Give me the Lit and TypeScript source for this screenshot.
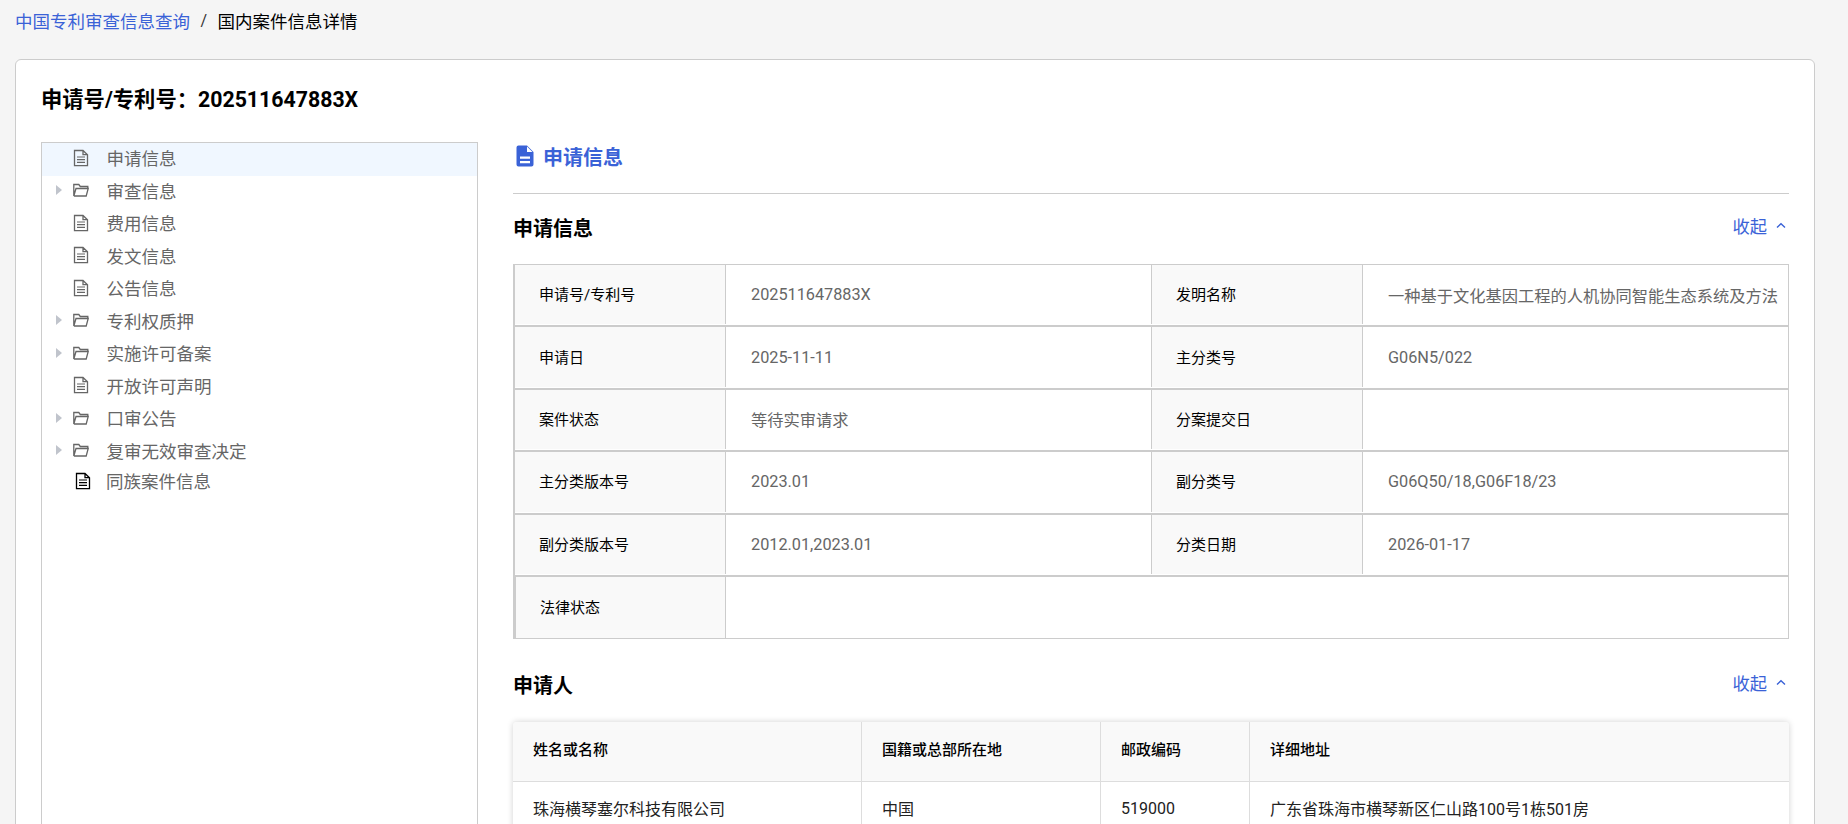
import { LitElement, html, css, svg } from 'lit';
import { customElement } from 'lit/decorators.js';

const docIcon = (dark = false) => html`<svg class="ico ${dark ? 'dark' : ''}" width="16" height="18" viewBox="0 0 16 18">
  <path d="M1.5 1.500h8.500l4.500 4.200v11H1.500z M10 1.500v4.200h4.500" fill="none" stroke="currentColor" stroke-width="1.3"/>
  ${svg`<path d="M4 8h8M4 10.700h8M4 13.400h8" stroke="currentColor" stroke-width="1.2"/>`}
</svg>`;

const folderIcon = html`<svg class="ico" width="16" height="18" viewBox="0 0 16 18">
  <path d="M.8 15V3.500h5l1.500 2h7.500v2M.8 15h12.400l2-7.500H3L.8 15" fill="none" stroke="currentColor" stroke-width="1.3"/>
</svg>`;

const chevron = html`<svg class="chev" width="10" height="7" viewBox="0 0 10 7">
  <path d="M1 5.500 5 1.800l4 3.700" fill="none" stroke="currentColor" stroke-width="1.400"/>
</svg>`;

const treeItems: [string, 'doc' | 'folder'][] = [
  ['申请信息', 'doc'],
  ['审查信息', 'folder'],
  ['费用信息', 'doc'],
  ['发文信息', 'doc'],
  ['公告信息', 'doc'],
  ['专利权质押', 'folder'],
  ['实施许可备案', 'folder'],
  ['开放许可声明', 'doc'],
  ['口审公告', 'folder'],
  ['复审无效审查决定', 'folder'],
];

const infoRows = [
  ['申请号/专利号', '202511647883X', '发明名称', '一种基于文化基因工程的人机协同智能生态系统及方法'],
  ['申请日', '2025-11-11', '主分类号', 'G06N5/022'],
  ['案件状态', '等待实审请求', '分案提交日', ''],
  ['主分类版本号', '2023.01', '副分类号', 'G06Q50/18,G06F18/23'],
  ['副分类版本号', '2012.01,2023.01', '分类日期', '2026-01-17'],
];

@customElement('app-root')
export class AppRoot extends LitElement {
  static styles = css`
    :host {
      display: block;
      height: 100vh;
      overflow: hidden;
      background: #f5f5f5;
      font-family: Roboto, 'Noto Sans CJK SC', sans-serif;
      color: #000;
    }
    .crumb {
      height: 40px;
      padding-left: 15px;
      display: flex;
      align-items: center;
      font-size: 17.5px;
      margin-bottom: 19px;
    }
    .crumb a { color: #3a62d7; text-decoration: none; }
    .crumb .sep { color: #333; margin: 0 10.500px; font-size: 16px; }
    .card {
      width: 1800px;
      box-sizing: border-box;
      margin-left: 15px;
      background: #fff;
      border: 1px solid #ccc;
      border-radius: 6px;
      padding: 25px 25px 0;
      height: 900px;
    }
    .title {
      font-size: 21.300px;
      font-weight: 700;
      line-height: 30px;
      margin-bottom: 27px;
    }
    .body { display: flex; gap: 35px; }
    .tree {
      width: 437px;
      height: 760px;
      box-sizing: border-box;
      border: 1px solid #ccc;
      flex: none;
    }
    .node {
      height: 32.500px;
      box-sizing: border-box;
      padding-bottom: 3px;
      display: flex;
      align-items: center;
      color: #666;
      font-size: 17.500px;
    }
    .node.active { background: #f0f7ff; }
    .node.last { height: 28px; }
    .arrow {
      width: 0;
      height: 0;
      border-left: 6px solid #c0c4cc;
      border-top: 5px solid transparent;
      border-bottom: 5px solid transparent;
      margin-left: 14px;
      margin-right: 11px;
    }
    .noarrow { width: 31px; flex: none; }
    .ico { flex: none; color: #666; margin-right: 17.500px; }
    .ico.dark { color: #000; margin-left: 2px; margin-right: 15px; }
    .main { width: 1276px; flex: none; }
    .heading {
      height: 52px;
      box-sizing: border-box;
      border-bottom: 1px solid #ccc;
      display: flex;
      align-items: center;
      gap: 9px;
      padding: 0 0 23px 3px;
      color: #3a62d7;
      font-size: 20px;
      font-weight: 700;
    }
    .section-head {
      height: 70px;
      box-sizing: border-box;
      padding-bottom: 4px;
      display: flex;
      align-items: center;
      justify-content: space-between;
      font-size: 20px;
      font-weight: 700;
    }
    .section-head.second { margin-top: 13px; padding-bottom: 6px; }
    .toggle {
      display: flex;
      align-items: center;
      gap: 9px;
      color: #3a62d7;
      font-size: 17.300px;
      font-weight: 400;
      margin-bottom: 4px;
      padding-right: 3px;
    }
    .info {
      border: 1px solid #ccc;
      border-bottom: none;
      border-left-width: 2px;
      width: 1276px;
      box-sizing: border-box;
    }
    .row {
      height: 62.400px;
      box-sizing: border-box;
      display: grid;
      grid-template-columns: 211px 425px 212px 1fr;
      border-bottom: 2px solid #ccc;
      font-size: 15px;
    }
    .row > div {
      display: flex;
      align-items: center;
      white-space: nowrap;
      margin-bottom: 1px;
    }
    .label {
      background: #f9f9f9;
      padding: 0 0 2px 24px;
      border-right: 1px solid #ccc;
    }
    .label.second { border-left: 1px solid #ccc; }
    .value {
      padding-left: 25px;
      color: #666;
      font-size: 16.250px;
    }
    .row.law { grid-template-columns: 211px 1fr; border-bottom-width: 1px; }
    .row.law > div { margin-bottom: 0; }
    .row.law .label { border-left: 1px solid #ccc; }
    .people {
      border-radius: 4px;
      box-shadow: 0 0 6px rgba(0, 0, 0, 0.18);
      overflow: hidden;
    }
    .people-row {
      display: grid;
      grid-template-columns: 349px 239px 149px 1fr;
      height: 60px;
      box-sizing: border-box;
      border-bottom: 1px solid #ddd;
      font-size: 16px;
      color: #222;
    }
    .people-row.head {
      height: 59.500px;
      background: #f9f9f9;
      font-size: 15px;
      font-weight: 500;
      color: #000;
    }
    .people-row > div {
      display: flex;
      align-items: center;
      padding: 0 0 6px 20px;
      border-right: 1px solid #ddd;
    }
    .people-row > div:last-child { border-right: none; }
  `;

  render() {
    return html`
      <div class="crumb">
        <a href="#">中国专利审查信息查询</a><span class="sep">/</span><span>国内案件信息详情</span>
      </div>
      <div class="card">
        <div class="title">申请号/专利号：202511647883X</div>
        <div class="body">
          <div class="tree">
            ${treeItems.map(
              ([name, kind], i) => html`
                <div class="node ${i === 0 ? 'active' : ''}">
                  ${kind === 'folder'
                    ? html`<span class="arrow"></span>${folderIcon}`
                    : html`<span class="noarrow"></span>${docIcon()}`}
                  ${name}
                </div>
              `
            )}
            <div class="node last"><span class="noarrow"></span>${docIcon(true)}同族案件信息</div>
          </div>
          <div class="main">
            <div class="heading">
              <svg width="18" height="22" viewBox="0 0 18 22">
                <path d="M2.500 .5H11l6.500 6.500v12.500a2 2 0 0 1-2 2h-13a2 2 0 0 1-2-2v-17a2 2 0 0 1 2-2z" fill="#3a62d7"/>
                <path d="M11 1.500V7h5.500z" fill="#fff"/>
                <path d="M4 11.500h10v2.200H4zM4 16h10v2.200H4z" fill="#fff"/>
              </svg>
              申请信息
            </div>
            <div class="section-head">申请信息<span class="toggle">收起${chevron}</span></div>
            <div class="info">
              ${infoRows.map(
                (r) => html`
                  <div class="row">
                    <div class="label">${r[0]}</div>
                    <div class="value">${r[1]}</div>
                    <div class="label second">${r[2]}</div>
                    <div class="value">${r[3]}</div>
                  </div>
                `
              )}
              <div class="row law">
                <div class="label">法律状态</div>
                <div class="value"></div>
              </div>
            </div>
            <div class="section-head second">申请人<span class="toggle">收起${chevron}</span></div>
            <div class="people">
              <div class="people-row head">
                <div>姓名或名称</div>
                <div>国籍或总部所在地</div>
                <div>邮政编码</div>
                <div>详细地址</div>
              </div>
              <div class="people-row">
                <div>珠海横琴塞尔科技有限公司</div>
                <div>中国</div>
                <div>519000</div>
                <div>广东省珠海市横琴新区仁山路100号1栋501房</div>
              </div>
            </div>
          </div>
        </div>
      </div>
    `;
  }
}
